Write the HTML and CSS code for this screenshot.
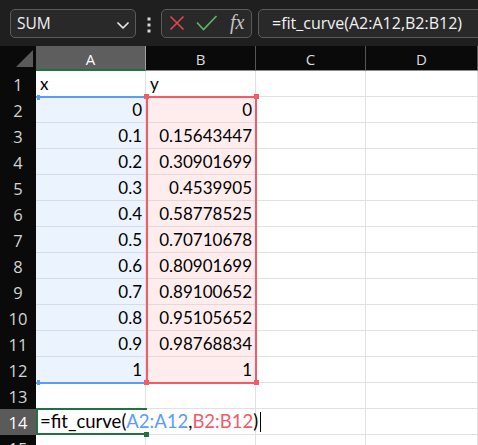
FILE: index.html
```html
<!DOCTYPE html>
<html>
<head>
<meta charset="utf-8">
<link rel="stylesheet" href="styles.css">
</head>
<body>
<div class="toolbar">
  <div class="namebox">
    <span class="nb-text">SUM</span>
    <svg class="chev" width="12" height="8" viewBox="0 0 12 8"><polyline points="1,1 6,6 11,1" fill="none" stroke="#e8e8e8" stroke-width="1.7" stroke-linecap="round" stroke-linejoin="round"/></svg>
  </div>
  <svg class="dots" width="4" height="18" viewBox="0 0 4 18"><rect x="0.5" y="0.5" width="3" height="3" fill="#d8d8d8"/><rect x="0.5" y="6.5" width="3" height="3" fill="#d8d8d8"/><rect x="0.5" y="12.5" width="3" height="3" fill="#d8d8d8"/></svg>
  <div class="fxbox">
    <svg class="ic-x" width="16" height="16" viewBox="0 0 16 16"><path d="M1.5 1.5 L14.5 14.5 M14.5 1.5 L1.5 14.5" stroke="#e0474f" stroke-width="1.6" fill="none"/></svg>
    <svg class="ic-ok" width="22" height="16" viewBox="0 0 22 16"><polyline points="1,7.5 7.5,14.5 20.5,1" fill="none" stroke="#5cb86a" stroke-width="1.6"/></svg>
    <span class="fx">fx</span>
  </div>
  <div class="formula">=fit_curve(A2:A12,B2:B12)</div>
</div>

<div class="sheet">
  <div class="corner"><svg width="36" height="25" viewBox="0 0 36 25"><polygon points="33,4 33,21 16,21" fill="#5a5a5a"/></svg></div>
  <div class="ch sel">A</div>
  <div class="ch">B</div>
  <div class="ch">C</div>
  <div class="ch">D</div>

  <div class="rh">1</div><div class="c">x</div><div class="c">y</div><div class="c"></div><div class="c"></div>
  <div class="rh">2</div><div class="c fa n">0</div><div class="c fb n">0</div><div class="c"></div><div class="c"></div>
  <div class="rh">3</div><div class="c fa n">0.1</div><div class="c fb n">0.15643447</div><div class="c"></div><div class="c"></div>
  <div class="rh">4</div><div class="c fa n">0.2</div><div class="c fb n">0.30901699</div><div class="c"></div><div class="c"></div>
  <div class="rh">5</div><div class="c fa n">0.3</div><div class="c fb n">0.4539905</div><div class="c"></div><div class="c"></div>
  <div class="rh">6</div><div class="c fa n">0.4</div><div class="c fb n">0.58778525</div><div class="c"></div><div class="c"></div>
  <div class="rh">7</div><div class="c fa n">0.5</div><div class="c fb n">0.70710678</div><div class="c"></div><div class="c"></div>
  <div class="rh">8</div><div class="c fa n">0.6</div><div class="c fb n">0.80901699</div><div class="c"></div><div class="c"></div>
  <div class="rh">9</div><div class="c fa n">0.7</div><div class="c fb n">0.89100652</div><div class="c"></div><div class="c"></div>
  <div class="rh">10</div><div class="c fa n">0.8</div><div class="c fb n">0.95105652</div><div class="c"></div><div class="c"></div>
  <div class="rh">11</div><div class="c fa n">0.9</div><div class="c fb n">0.98768834</div><div class="c"></div><div class="c"></div>
  <div class="rh">12</div><div class="c fa n">1</div><div class="c fb n">1</div><div class="c"></div><div class="c"></div>
  <div class="rh">13</div><div class="c"></div><div class="c"></div><div class="c"></div><div class="c"></div>
  <div class="rh sel">14</div><div class="c edit">=fit_curve(<span class="ra">A2:A12</span>,<span class="rb">B2:B12</span>)<span class="caret"></span></div><div class="c"></div><div class="c"></div><div class="c"></div>
  <div class="rh">15</div><div class="c"></div><div class="c"></div><div class="c"></div><div class="c"></div>

  <div class="rng-a"><span class="ha ha-t"></span><span class="ha ha-b"></span></div>
  <div class="rng-b"><span class="hb tl"></span><span class="hb tr"></span><span class="hb bl"></span><span class="hb br"></span></div>
  <div class="active"><span class="fill-h"></span></div>
</div>
</body>
</html>
```

FILE: styles.css
```css
html, body {
  margin: 0;
  padding: 0;
}
body {
  width: 478px;
  height: 445px;
  overflow: hidden;
  background: #1f1f1f;
  font-family: "Open Sans", "Noto Sans", sans-serif;
}

/* ---------- toolbar ---------- */
.toolbar {
  display: flex;
  align-items: center;
  height: 46px;
  padding-left: 10px;
  box-sizing: border-box;
}
.namebox {
  flex-shrink: 0;
  width: 126px;
  height: 29px;
  box-sizing: border-box;
  border: 1px solid #5b5b5b;
  border-radius: 5px;
  background: #292929;
  display: flex;
  align-items: center;
  justify-content: space-between;
  padding: 0 6px 0 6px;
}
.nb-text {
  color: #f2f2f2;
  font-size: 15.5px;
  line-height: 27px;
  margin-top: 1px;
}
.chev {
  display: block;
  margin-top: 5px;
}
.dots {
  flex-shrink: 0;
  display: block;
  margin-left: 11px;
  margin-top: 5px;
}
.fxbox {
  flex-shrink: 0;
  margin-left: 10px;
  width: 91px;
  height: 29px;
  box-sizing: border-box;
  border: 1px solid #5b5b5b;
  border-radius: 5px;
  background: #292929;
  display: flex;
  align-items: center;
  padding-left: 7px;
}
.ic-x { display: block; }
.ic-ok { display: block; margin-left: 11px; }
.fx {
  margin-left: 12px;
  font-family: "Liberation Serif", "DejaVu Serif", serif;
  font-style: italic;
  font-size: 20px;
  color: #c4c4c4;
  line-height: 27px;
  margin-top: -2px;
}
.formula {
  flex-shrink: 0;
  margin-left: 6px;
  width: 240px;
  height: 29px;
  box-sizing: border-box;
  border: 1px solid #5b5b5b;
  border-radius: 5px;
  background: #292929;
  color: #f2f2f2;
  font-size: 16px;
  line-height: 27px;
  padding-left: 13px;
  white-space: nowrap;
}

/* ---------- sheet ---------- */
.sheet {
  position: relative;
  display: grid;
  grid-template-columns: 36px 110px 110px 110px 112px;
  grid-template-rows: 25px repeat(15, 26px);
  background: #ffffff;
}
.corner {
  background: #0a0a0a;
}
.corner svg { display: block; }
.ch {
  background: #0a0a0a;
  color: #dcdcdc;
  font-size: 15px;
  text-align: center;
  line-height: 26px;
  box-sizing: border-box;
  border-right: 1px solid #565656;
  border-bottom: 1px solid #8c8c8c;
}
.ch.sel {
  background: #5e5e5e;
  color: #ffffff;
  border-right-color: #a0a0a0;
  border-bottom: 2px solid #1f7244;
}
.rh {
  background: #0a0a0a;
  color: #d4d4d4;
  font-size: 16.5px;
  text-align: center;
  line-height: 27px;
}
.rh.sel {
  background: #5a5a5a;
  color: #ffffff;
}
.c {
  background: #ffffff;
  box-sizing: border-box;
  border-right: 1px solid #e1e1e1;
  border-bottom: 1px solid #e1e1e1;
  font-family: "Lato", "Open Sans", sans-serif;
  font-size: 17px;
  line-height: 26px;
  color: #000000;
  padding: 0 3px 0 4px;
  white-space: nowrap;
}
.c.n { text-align: right; }
.c.fa { background: #ebf3fe; border-bottom-color: #d6dce6; }
.c.fb { background: #ffeded; border-bottom-color: #e6d8d8; }
.c.edit {
  position: relative;
  z-index: 1;
  overflow: visible;
  border-right: none;
  padding-left: 4px;
  font-size: 18.5px;
  line-height: 25px;
}
.ra { color: #5b9cf6; }
.rb { color: #f45b69; }
.caret {
  display: inline-block;
  width: 1px;
  height: 20px;
  background: #000000;
  margin-left: 2px;
  vertical-align: -4px;
}

/* reference range highlights (overlays) */
.rng-a {
  position: absolute;
  left: 36px;
  top: 50px;
  width: 111px;
  height: 288px;
  box-sizing: border-box;
  border-top: 2px solid #5b9cf6;
  border-bottom: 2px solid #5b9cf6;
  z-index: 2;
}
.ha {
  position: absolute;
  left: 1px;
  width: 3px;
  height: 5px;
  background: #5b9cf6;
}
.ha-t { top: -3px; }
.ha-b { bottom: -3px; }
.rng-b {
  position: absolute;
  left: 146px;
  top: 50px;
  width: 111px;
  height: 288px;
  box-sizing: border-box;
  border: 2px solid #f45b69;
  z-index: 3;
}
.hb {
  position: absolute;
  width: 5px;
  height: 5px;
  background: #f45b69;
}
.hb.tl { left: -4px; top: -4px; }
.hb.tr { right: -4px; top: -4px; }
.hb.bl { left: -4px; bottom: -3px; }
.hb.br { right: -4px; bottom: -3px; }

.active {
  position: absolute;
  left: 36px;
  top: 362px;
  width: 111px;
  height: 27px;
  box-sizing: border-box;
  border-top: 2px solid #1f7244;
  border-left: 2px solid #1f7244;
  border-bottom: 2px solid #1f7244;
  z-index: 4;
}
.fill-h {
  position: absolute;
  right: -2px;
  bottom: -4px;
  width: 5px;
  height: 5px;
  background: #1f7244;
}
```
